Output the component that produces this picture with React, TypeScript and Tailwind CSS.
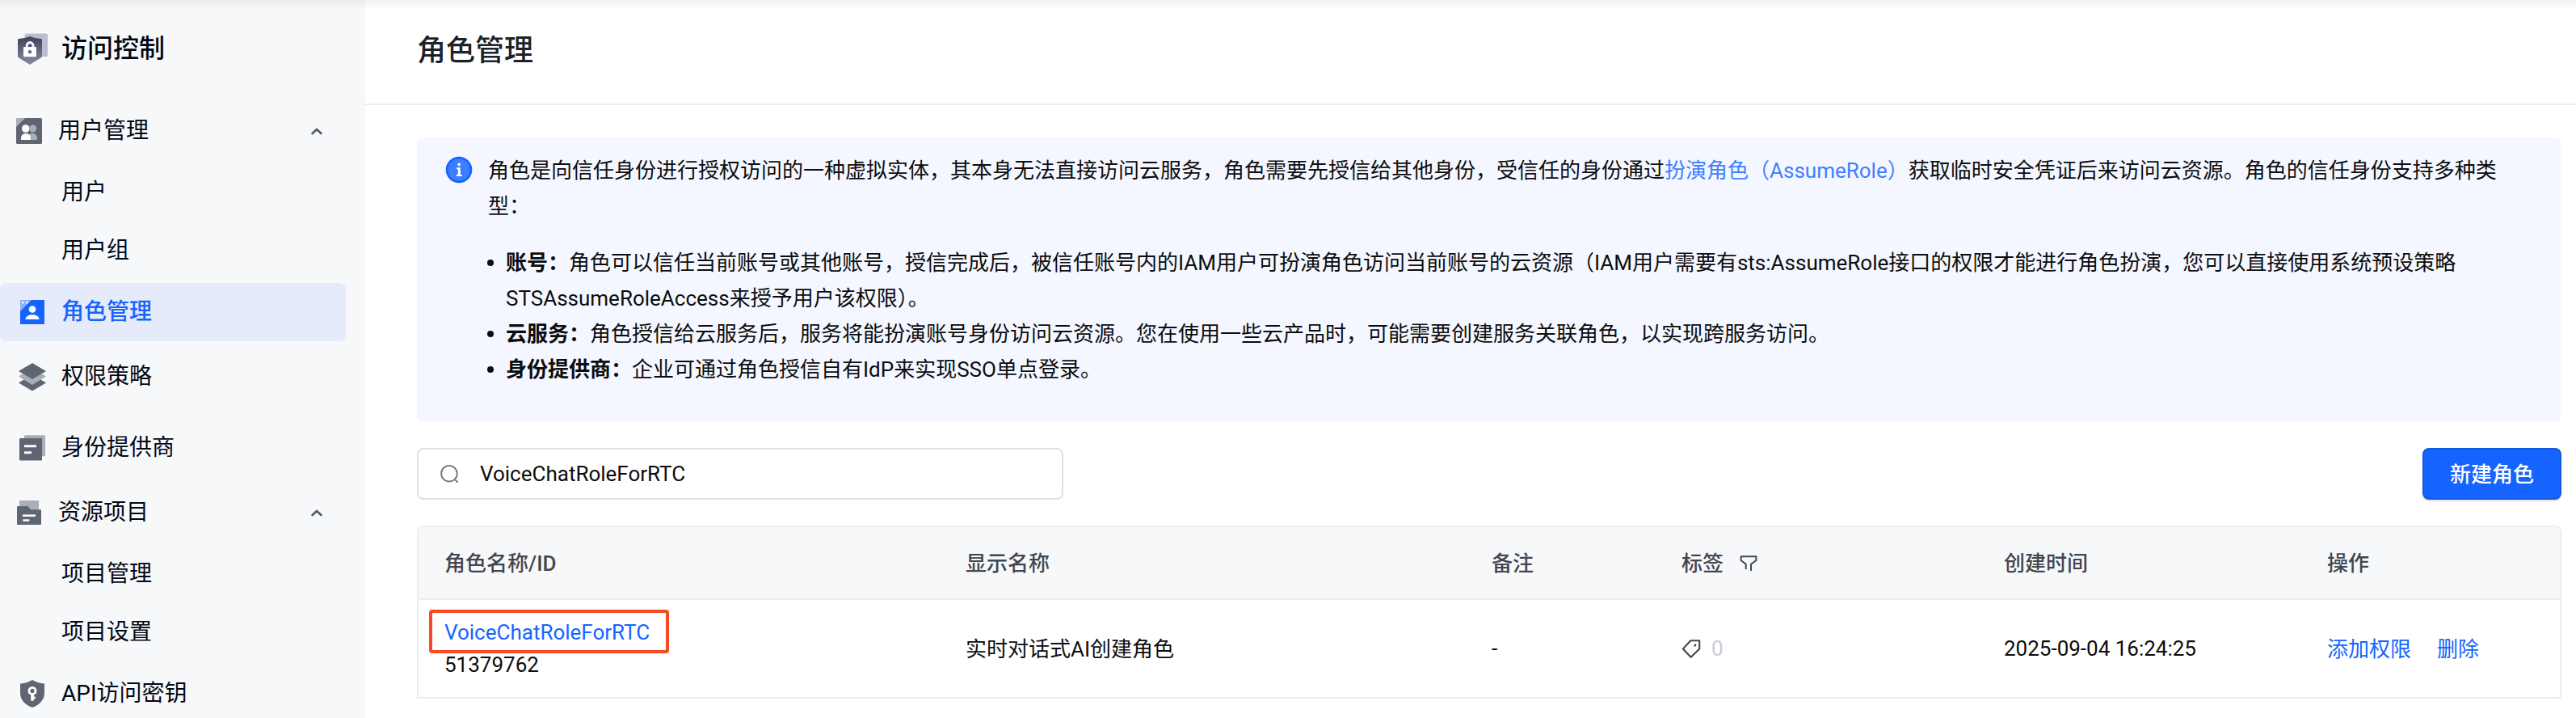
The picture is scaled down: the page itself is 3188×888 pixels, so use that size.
import type { ReactNode } from "react";

const INK = "#5f6673";

function LogoIcon() {
  return (
    <svg width="38" height="40" viewBox="0 0 38 40">
      <defs>
        <linearGradient id="shield" x1="0" y1="0" x2="0" y2="1">
          <stop offset="0" stopColor="#3d4358" />
          <stop offset="1" stopColor="#878da0" />
        </linearGradient>
      </defs>
      <rect x="9.5" y="0.5" width="28.5" height="28.5" rx="1.5" fill="#b9bdce" />
      <path d="M15.9 4 Q23 6.8 30 7 Q31 7.2 31 8.2 V28.5 Q31 29.8 30 30.3 L15.9 39 L1.9 30.3 Q1 29.8 1 28.5 V8.2 Q1 7.2 2 7 Q9 6.8 15.9 4Z" fill="url(#shield)" />
      <path d="M12.2 18 V15.4 a3.9 3.9 0 0 1 7.8 0 V18" fill="none" stroke="#fff" strokeWidth="2.8" />
      <rect x="8" y="17" width="16" height="12.3" rx="1" fill="#fff" />
      <circle cx="16" cy="23.2" r="2.1" fill="#5b6175" />
    </svg>
  );
}

function UsersIcon() {
  return (
    <svg width="32" height="32" viewBox="0 0 32 32">
      <rect width="32" height="32" rx="1.5" fill={INK} />
      <path d="M1 0 H11 L0 11 V1 Q0 0 1 0Z" fill="#aaaeb6" />
      <circle cx="20.6" cy="13" r="4.6" fill="#aaaeb6" />
      <path d="M14 27 V25 C14 16.5 26 16.5 26 25 V27Z" fill="#aaaeb6" />
      <circle cx="11.8" cy="13" r="5.4" fill={INK} />
      <circle cx="11.8" cy="13" r="4.8" fill="#fff" />
      <path d="M6 27 V25 C6 17 18 17 18 25 V27Z" fill="#fff" />
    </svg>
  );
}

function RoleIcon() {
  return (
    <svg width="30" height="30" viewBox="0 0 30 30">
      <rect width="30" height="30" rx="0.5" fill="#1664ff" />
      <path d="M0 0 H14 L0 14Z" fill="#8fb0ff" />
      <rect x="2" y="2" width="2.4" height="2.4" fill="#fff" />
      <rect x="7" y="2" width="2.4" height="2.4" fill="#fff" />
      <circle cx="15" cy="11.5" r="4.3" fill="#fff" />
      <path d="M6.5 24 C6.5 16.3 23.5 16.3 23.5 24Z" fill="#fff" />
    </svg>
  );
}

function LayersIcon() {
  return (
    <svg width="34" height="35" viewBox="0 0 34 35">
      <path d="M17 14 L34 24.5 L17 34.5 L0 24.5Z" fill={INK} />
      <path d="M17 6 L34 16.5 L17 27 L0 16.5Z" fill="#aaaeb6" />
      <path d="M17 0 L34 10 L17 20 L0 10Z" fill={INK} />
    </svg>
  );
}

function ProviderIcon() {
  return (
    <svg width="32" height="32" viewBox="0 0 32 32">
      <rect x="6" y="0.3" width="26" height="26" rx="1" fill="#aaaeb6" />
      <rect x="0" y="4" width="28" height="27.5" rx="1" fill={INK} />
      <rect x="6" y="12.3" width="15" height="2.9" fill="#fff" />
      <rect x="6" y="20.3" width="9" height="2.9" fill="#fff" />
    </svg>
  );
}

function ProjectIcon() {
  return (
    <svg width="30" height="30" viewBox="0 0 30 30">
      <rect x="3" y="0" width="24" height="20" fill="#aaaeb6" />
      <path d="M1 7 H13.5 L17 11.2 H29 Q30 11.2 30 12.2 V29 Q30 30 29 30 H1 Q0 30 0 29 V8 Q0 7 1 7Z" fill={INK} />
      <rect x="7" y="17.4" width="16" height="2.5" fill="#fff" />
      <rect x="7.3" y="23.3" width="8" height="2.4" fill="#fff" />
    </svg>
  );
}

function KeyIcon() {
  return (
    <svg width="30" height="34" viewBox="0 0 30 34">
      <path d="M15 0 Q22 4 30 4.6 V16 C30 25 23.5 31 15 34 C6.5 31 0 25 0 16 V4.6 Q8 4 15 0Z" fill={INK} />
      <circle cx="15" cy="13.4" r="4" fill="none" stroke="#fff" strokeWidth="2.9" />
      <path d="M13.2 17.5 H16.8 V20.4 H18.6 V23.4 H16.8 V25.8 H13.2Z" fill="#fff" />
    </svg>
  );
}

function Chevron() {
  return (
    <svg width="14" height="9" viewBox="0 0 14 9" className="mr-[53px]">
      <path d="M1.6 7 L7 2 L12.4 7" fill="none" stroke="#4e5969" strokeWidth="2.6" strokeLinecap="round" />
    </svg>
  );
}

function InfoIcon() {
  return (
    <svg width="34" height="34" viewBox="0 0 34 34">
      <circle cx="17" cy="17" r="16.3" fill="#1664ff" />
      <circle cx="17" cy="17" r="13.6" fill="#3d7dff" />
      <circle cx="17.2" cy="10.4" r="1.8" fill="#fff" />
      <path d="M14 14.2 H18.8 V23 H20.9 V25 H13.6 V23 H15.8 V16.2 H14Z" fill="#fff" />
    </svg>
  );
}

function SearchIcon() {
  return (
    <svg width="24" height="24" viewBox="0 0 24 24">
      <circle cx="11.9" cy="11.7" r="9.8" fill="none" stroke="#737a87" strokeWidth="1.9" />
      <path d="M19.2 19.6 L22.8 22.8" stroke="#737a87" strokeWidth="2" />
    </svg>
  );
}

function FilterIcon() {
  return (
    <svg width="22" height="20" viewBox="0 0 22 20">
      <path d="M7.7 17 V10.8 L1.6 6 V1.2 H20.4 V6 L14 10.8 V19" fill="none" stroke="#42464e" strokeWidth="2" strokeLinejoin="round" />
    </svg>
  );
}

function TagIcon() {
  return (
    <svg width="24" height="24" viewBox="0 0 24 24">
      <path d="M11.3 2.2 H22.2 V12.6 L11.6 22.8 L1.8 12.6Z" fill="none" stroke="#42464e" strokeWidth="2.1" strokeLinejoin="round" />
      <circle cx="16.8" cy="8" r="1.5" fill="#42464e" />
    </svg>
  );
}

function Sidebar() {
  return (
    <aside className="flex h-[888px] w-[452px] shrink-0 flex-col overflow-hidden bg-[#f7f8fa] text-[28px] leading-[40px] text-[#020814]">
      <div className="mt-[37px] flex h-[46px] shrink-0 items-center">
        <span className="ml-[21px] w-[55px] pt-[2px]"><LogoIcon /></span>
        <span className="text-[32px] font-medium">访问控制</span>
      </div>
      <div className="mt-[43px] flex h-[72px] shrink-0 items-center">
        <span className="ml-5 w-[52px]"><UsersIcon /></span>
        <span className="flex-1">用户管理</span>
        <Chevron />
      </div>
      <div className="mt-[5px] flex h-[70px] shrink-0 items-center pl-[76px]">用户</div>
      <div className="mt-0.5 flex h-[70px] shrink-0 items-center pl-[76px]">用户组</div>
      <div className="mt-[5px] flex h-[72px] w-[428px] shrink-0 items-center rounded-lg bg-[#e6ebfb] font-medium text-[#1664ff]">
        <span className="ml-[25px] w-[51px]"><RoleIcon /></span>角色管理
      </div>
      <div className="mt-2 flex h-[72px] shrink-0 items-center">
        <span className="ml-[23px] w-[53px]"><LayersIcon /></span>权限策略
      </div>
      <div className="mt-4 flex h-[72px] shrink-0 items-center">
        <span className="ml-6 w-[52px]"><ProviderIcon /></span>身份提供商
      </div>
      <div className="mt-2 flex h-[72px] shrink-0 items-center">
        <span className="ml-[21px] w-[51px]"><ProjectIcon /></span>
        <span className="flex-1">资源项目</span>
        <Chevron />
      </div>
      <div className="mt-1 flex h-[72px] shrink-0 items-center pl-[76px]">项目管理</div>
      <div className="flex h-[72px] shrink-0 items-center pl-[76px]">项目设置</div>
      <div className="mt-1 flex h-[72px] shrink-0 items-center">
        <span className="ml-[25px] w-[51px]"><KeyIcon /></span>API访问密钥
      </div>
    </aside>
  );
}

function Bullet({ children }: { children: ReactNode }) {
  return (
    <li className="flex">
      <span className="mt-[18px] mr-[15px] ml-[-1px] h-2 w-2 shrink-0 rounded-full bg-[#0c0d0e]" />
      <span className="whitespace-nowrap">{children}</span>
    </li>
  );
}

function Notice() {
  return (
    <section className="mt-10 flex h-[352px] w-[2654px] rounded-lg bg-[#f4f7ff] pt-[19px] text-[26px] leading-[44px] text-[#0c0d0e]">
      <span className="mt-1 ml-[35px] w-[53px] shrink-0"><InfoIcon /></span>
      <div>
        <p className="whitespace-nowrap">
          角色是向信任身份进行授权访问的一种虚拟实体，其本身无法直接访问云服务，角色需要先授信给其他身份，受信任的身份通过
          <a className="text-[#4080ff]">扮演角色（AssumeRole）</a>
          获取临时安全凭证后来访问云资源。角色的信任身份支持多种类
          <br />
          型：
        </p>
        <ul className="mt-[26px]">
          <Bullet>
            <b className="font-bold">账号：</b>
            角色可以信任当前账号或其他账号，授信完成后，被信任账号内的IAM用户可扮演角色访问当前账号的云资源（IAM用户需要有sts:AssumeRole接口的权限才能进行角色扮演，您可以直接使用系统预设策略
            <br />
            STSAssumeRoleAccess来授予用户该权限）。
          </Bullet>
          <Bullet>
            <b className="font-bold">云服务：</b>
            角色授信给云服务后，服务将能扮演账号身份访问云资源。您在使用一些云产品时，可能需要创建服务关联角色，以实现跨服务访问。
          </Bullet>
          <Bullet>
            <b className="font-bold">身份提供商：</b>
            企业可通过角色授信自有IdP来实现SSO单点登录。
          </Bullet>
        </ul>
      </div>
    </section>
  );
}

const COLS = "grid grid-cols-[645px_651px_235px_399px_400px_1fr] items-center pl-8";

function RoleTable() {
  return (
    <section className="mt-8 w-[2654px] overflow-hidden rounded-t-lg border-2 border-[#eaedf1] text-[26px] leading-[40px] text-[#0c0d0e]">
      <div className={`${COLS} h-[90px] border-b-2 border-[#eaedf1] bg-[#f7f8fa] pt-px font-medium text-[#42464e]`}>
        <span>角色名称/ID</span>
        <span>显示名称</span>
        <span>备注</span>
        <span className="flex items-center gap-5">标签<FilterIcon /></span>
        <span>创建时间</span>
        <span>操作</span>
      </div>
      <div className={`${COLS} h-[120px]`}>
        <span className="flex flex-col">
          <a className="relative text-[#1664ff]">
            VoiceChatRoleForRTC
            <span className="absolute -top-2 -left-[19px] h-[54px] w-[297px] rounded border-4 border-[#f54a25]" />
          </a>
          <span>51379762</span>
        </span>
        <span className="pt-0.5">实时对话式AI创建角色</span>
        <span>-</span>
        <span className="flex items-center gap-[13px] text-[#c7ccd9]"><TagIcon />0</span>
        <span>2025-09-04 16:24:25</span>
        <span className="flex gap-8 pt-0.5 text-[#1664ff]"><a>添加权限</a><a>删除</a></span>
      </div>
    </section>
  );
}

export default function App() {
  return (
    <div className="relative flex h-[888px] w-[3188px] overflow-hidden bg-white font-[Roboto,'Noto_Sans_CJK_SC',sans-serif]">
      <Sidebar />
      <main className="flex flex-1 flex-col">
        <header className="flex h-[130px] items-center border-b-2 border-[#eaedf1] pb-[3px] pl-16 text-[36px] font-medium text-[#1d2129]">
          角色管理
        </header>
        <div className="pl-16">
          <Notice />
          <div className="mt-8 flex h-16 w-[2654px] justify-between text-[26px]">
            <div className="flex h-16 w-[800px] items-center rounded-lg border-2 border-[#dde2e9] pl-[26px] text-[#0c0d0e]">
              <span className="w-[50px]"><SearchIcon /></span>
              VoiceChatRoleForRTC
            </div>
            <button className="h-16 w-[172px] rounded-lg border-2 border-[#1258e0] bg-[#1664ff] pt-0.5 font-medium text-white shadow-[0_2px_2px_rgba(0,0,0,0.12)]">
              新建角色
            </button>
          </div>
          <RoleTable />
        </div>
      </main>
      <div className="pointer-events-none absolute inset-x-0 top-0 h-3 bg-linear-to-b from-black/5 to-transparent" />
    </div>
  );
}
